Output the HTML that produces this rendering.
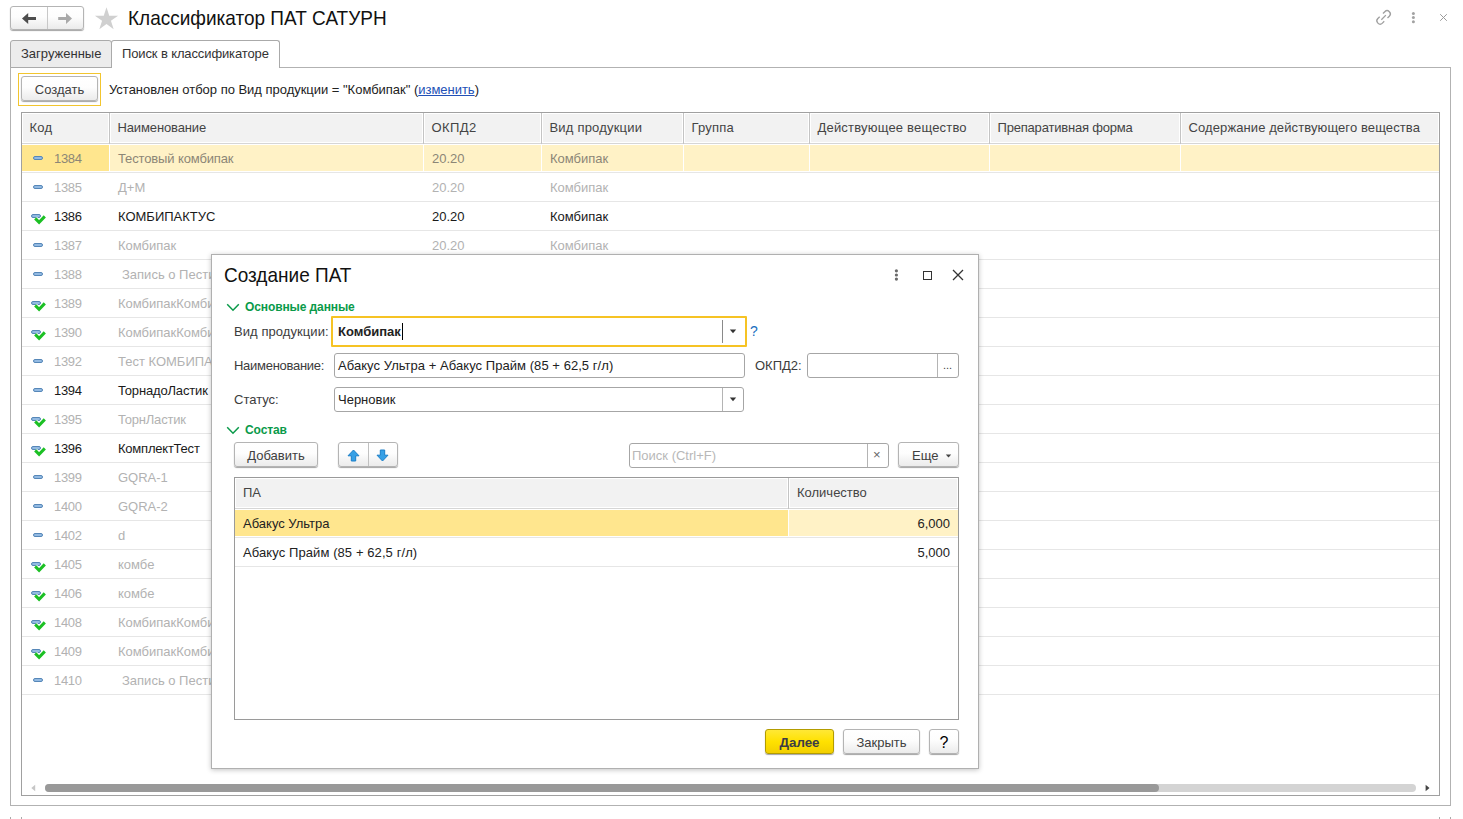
<!DOCTYPE html>
<html lang="ru">
<head>
<meta charset="utf-8">
<title>Классификатор ПАТ САТУРН</title>
<style>
*{box-sizing:border-box;margin:0;padding:0}
html,body{width:1463px;height:819px;overflow:hidden;background:#fff}
body{position:relative;font-family:"Liberation Sans",sans-serif;font-size:13px;color:#333;line-height:16px}
.abs{position:absolute}
.btn{position:absolute;border:1px solid #b4b4b4;border-radius:3px;background:linear-gradient(#ffffff 0%,#fdfdfd 45%,#ebebeb 100%);box-shadow:0 1px 1px rgba(0,0,0,.36);text-align:center;color:#404040;white-space:nowrap}
.lbl{position:absolute;white-space:nowrap;line-height:16px;color:#3c3c3c}
.inp{position:absolute;border:1px solid #a6a6a6;border-radius:3px;background:#fff}
/* nav */
#nav{left:10px;top:6px;width:74px;height:24px}
#nav .dv{position:absolute;left:36px;top:0;width:1px;height:22px;background:#c8c8c8}
#title{left:128px;top:8px;font-size:19px;line-height:22px;color:#111;transform:scaleY(1.070);transform-origin:0 16px}
/* tabs */
#tab1{left:10px;top:40px;width:102px;height:28px;border:1px solid #aaa;border-radius:3px 3px 0 0;background:#ececec}
#tab2{left:111px;top:40px;width:169px;height:28px;border:1px solid #aaa;border-bottom:none;border-radius:3px 3px 0 0;background:#fff}
#frame{left:10px;top:67px;width:1441px;height:739px;border:1px solid #b2b2b2}
.tabt{position:absolute;top:5px;font-size:13px;color:#333;white-space:nowrap}
#focus{left:18px;top:73px;width:83px;height:33px;border:1px solid #f2c52e}
#create{left:21px;top:76px;width:77px;height:25px;line-height:25px}
#filter{left:109px;top:82px;color:#222;letter-spacing:-0.02px}
#filter a{color:#2250b6;text-decoration:underline}
/* main table */
#tbl{left:21px;top:112px;width:1419px;height:684px;border:1px solid #a0a0a0;overflow:hidden}
#thead{position:absolute;left:0;top:0;width:1417px;height:31px;background:#fff;border-bottom:1px solid #d6d6d6}
.th{position:absolute;top:1px;height:28px;background:#f2f2f2;border-left:1px solid #fff;border-right:1px solid #fff;background-clip:padding-box}
.th span{position:absolute;left:6.5px;top:6px;white-space:nowrap;color:#444}
.th:after{content:"";position:absolute;right:-2px;top:-1px;width:1px;height:31px;background:#c4c4c4}
.th:last-child:after{display:none}
.row{position:absolute;left:0;width:1417px;height:29px;border-bottom:1px solid #e6e6e6;color:#b2b2b2}
.row.dark{color:#1a1a1a}
.row .c{position:absolute;top:7px;white-space:nowrap}
.row .ic{position:absolute;left:0;top:0}
.row.sel{color:#8c8676}
.selbg1{position:absolute;left:0;top:1px;width:87px;height:26px;background:#ffe68e}
.selbg2{position:absolute;left:88px;top:1px;width:1329px;height:26px;background:#fff2c6}
.selgap{position:absolute;top:1px;width:1px;height:26px;background:#fff}
/* scrollbar */
#sbtrack{left:45px;top:784px;width:1371px;height:8px;border-radius:4px;background:#d4d4d4}
#sbthumb{left:45px;top:784px;width:1114px;height:8px;border-radius:4px;background:#999}
/* dialog */
#dlg{left:211px;top:254px;width:768px;height:515px;background:#fff;border:1px solid #b0b0b0;box-shadow:0 1px 5px rgba(0,0,0,.24)}
#dtitle{left:224px;top:265px;font-size:19px;line-height:22px;color:#111;transform:scaleY(1.070);transform-origin:0 16px}
.sec{position:absolute;font-weight:bold;font-size:12px;color:#0a9a4a;white-space:nowrap;letter-spacing:-0.1px}
#f1{left:331px;top:316px;width:416px;height:31px;border:2px solid #f6c324;border-radius:1px;background:#fff}
.hdr2{position:absolute;top:1px;height:28px;background:#f2f2f2}
#t2{left:234px;top:477px;width:725px;height:243px;border:1px solid #9a9a9a;background:#fff;overflow:hidden}
#next{left:765px;top:729px;width:69px;height:25px;line-height:25px;font-weight:bold;font-size:13.33px;border-color:#b39c00;background:linear-gradient(#ffe836 0%,#ffe100 50%,#f2cf00 100%);color:#3c3c46}
#close{left:843px;top:729px;width:77px;height:25px;line-height:25px}
#help{left:929px;top:729px;width:30px;height:25px;line-height:26px;font-size:16px;color:#000}
</style>
</head>
<body>
<!-- top bar -->
<div class="btn" id="nav">
  <div class="dv"></div>
  <svg class="abs" style="left:0;top:0" width="72" height="22" viewBox="0 0 72 22"><path d="M11 11.500L17.200 6v4H25v3h-7.800v4z" fill="#4d4d4d"/><path d="M47.200 10H55V6l6 5.500-6 5.500v-4h-7.800z" fill="#a9a9a9"/></svg>
</div>
<svg class="abs" style="left:94px;top:6px" width="26" height="26" viewBox="0 0 26 26"><path d="M12.50 1.20L15.24 9.63L24.10 9.63L16.93 14.84L19.67 23.27L12.50 18.06L5.33 23.27L8.07 14.84L0.90 9.63L9.76 9.63z" fill="#d0d0d0"/></svg>
<div class="lbl" id="title">Классификатор ПАТ САТУРН</div>
<!-- right icons -->
<svg class="abs" style="left:1373px;top:7px" width="21" height="21" viewBox="0 0 21 21"><g transform="translate(10.600 10.400) rotate(-45)" fill="none" stroke="#a0a0a0" stroke-width="1.350"><path d="M2.300 -3.200H4.900A3.200 3.200 0 0 1 4.900 3.200H2.300"/><path d="M-2.300 3.200H-4.900A3.200 3.200 0 0 1 -4.900 -3.200H-2.300"/><path d="M-3.200 0H3.200"/></g></svg>
<svg class="abs" style="left:1410px;top:11px" width="7" height="13" viewBox="0 0 7 13"><circle cx="3.400" cy="2.500" r="1.500" fill="#a2a2a2"/><circle cx="3.400" cy="6.600" r="1.500" fill="#a2a2a2"/><circle cx="3.400" cy="10.700" r="1.500" fill="#a2a2a2"/></svg>
<svg class="abs" style="left:1439px;top:13px" width="9" height="9" viewBox="0 0 9 9"><path d="M1.200 1.200l6.600 6.600M7.800 1.200L1.200 7.800" stroke="#9a9a9a" stroke-width="1" fill="none"/></svg>

<!-- tabs & frame -->
<div class="abs" id="frame"></div>
<div class="abs" id="tab1"><span class="tabt" style="left:10px">Загруженные</span></div>
<div class="abs" id="tab2"><span class="tabt" style="left:10px;letter-spacing:-0.12px">Поиск в классификаторе</span></div>

<div class="abs" id="focus"></div>
<div class="btn" id="create">Создать</div>
<div class="lbl" id="filter">Установлен отбор по Вид продукции = "Комбипак" (<a>изменить</a>)</div>

<!-- main table -->
<div class="abs" id="tbl">
  <div id="thead">
<div class="th" style="left:0px;width:87px"><span style="letter-spacing:0.3px">Код</span></div>
<div class="th" style="left:88px;width:313px"><span style="letter-spacing:-0.13px">Наименование</span></div>
<div class="th" style="left:402px;width:117px"><span style="letter-spacing:0.4px">ОКПД2</span></div>
<div class="th" style="left:520px;width:141px"><span style="letter-spacing:0.2px">Вид продукции</span></div>
<div class="th" style="left:662px;width:125px"><span style="letter-spacing:0.2px">Группа</span></div>
<div class="th" style="left:788px;width:179px"><span style="letter-spacing:0.19px">Действующее вещество</span></div>
<div class="th" style="left:968px;width:190px"><span style="letter-spacing:-0.19px">Препаративная форма</span></div>
<div class="th" style="left:1159px;width:258px"><span style="letter-spacing:0.1px">Содержание действующего вещества</span></div>
  </div>
<div class="row sel" style="top:31px">
<div class="selbg1"></div><div class="selbg2"></div>
<div class="selgap" style="left:401px"></div>
<div class="selgap" style="left:519px"></div>
<div class="selgap" style="left:661px"></div>
<div class="selgap" style="left:787px"></div>
<div class="selgap" style="left:967px"></div>
<div class="selgap" style="left:1158px"></div>
<svg class="ic" width="30" height="28" viewBox="0 0 30 28"><rect x="11.5" y="12.5" width="9" height="3" rx="1.5" fill="#93bae2" stroke="#5687b8" stroke-width="1"/></svg>
<span class="c" style="left:32px;letter-spacing:-0.3px">1384</span>
<span class="c" style="left:96px;letter-spacing:-0.13px">Тестовый комбипак</span>
<span class="c" style="left:410px">20.20</span>
<span class="c" style="left:528px">Комбипак</span>
</div>
<div class="row" style="top:60px">
<svg class="ic" width="30" height="28" viewBox="0 0 30 28"><rect x="11.5" y="12.5" width="9" height="3" rx="1.5" fill="#93bae2" stroke="#5687b8" stroke-width="1"/></svg>
<span class="c" style="left:32px;letter-spacing:-0.3px">1385</span>
<span class="c" style="left:96px">Д+М</span>
<span class="c" style="left:410px">20.20</span>
<span class="c" style="left:528px">Комбипак</span>
</div>
<div class="row dark" style="top:89px">
<svg class="ic" width="30" height="28" viewBox="0 0 30 28"><rect x="9.5" y="12.5" width="9" height="3" rx="1.5" fill="#93bae2" stroke="#5687b8" stroke-width="1"/><path d="M13.2 16.4L17.1 20.4L22.8 14.4" fill="none" stroke="#fff" stroke-width="4.6"/><path d="M13.2 16.4L17.1 20.4L22.8 14.4" fill="none" stroke="#1cc024" stroke-width="3"/></svg>
<span class="c" style="left:32px;letter-spacing:-0.3px">1386</span>
<span class="c" style="left:96px">КОМБИПАКТУС</span>
<span class="c" style="left:410px">20.20</span>
<span class="c" style="left:528px">Комбипак</span>
</div>
<div class="row" style="top:118px">
<svg class="ic" width="30" height="28" viewBox="0 0 30 28"><rect x="11.5" y="12.5" width="9" height="3" rx="1.5" fill="#93bae2" stroke="#5687b8" stroke-width="1"/></svg>
<span class="c" style="left:32px;letter-spacing:-0.3px">1387</span>
<span class="c" style="left:96px">Комбипак</span>
<span class="c" style="left:410px">20.20</span>
<span class="c" style="left:528px">Комбипак</span>
</div>
<div class="row" style="top:147px">
<svg class="ic" width="30" height="28" viewBox="0 0 30 28"><rect x="11.5" y="12.5" width="9" height="3" rx="1.5" fill="#93bae2" stroke="#5687b8" stroke-width="1"/></svg>
<span class="c" style="left:32px;letter-spacing:-0.3px">1388</span>
<span class="c" style="left:100px">Запись о Пестициде</span>
<span class="c" style="left:410px">20.20</span>
<span class="c" style="left:528px">Комбипак</span>
</div>
<div class="row" style="top:176px">
<svg class="ic" width="30" height="28" viewBox="0 0 30 28"><rect x="9.5" y="12.5" width="9" height="3" rx="1.5" fill="#93bae2" stroke="#5687b8" stroke-width="1"/><path d="M13.2 16.4L17.1 20.4L22.8 14.4" fill="none" stroke="#fff" stroke-width="4.6"/><path d="M13.2 16.4L17.1 20.4L22.8 14.4" fill="none" stroke="#1cc024" stroke-width="3"/></svg>
<span class="c" style="left:32px;letter-spacing:-0.3px">1389</span>
<span class="c" style="left:96px">КомбипакКомбипак</span>
<span class="c" style="left:410px">20.20</span>
<span class="c" style="left:528px">Комбипак</span>
</div>
<div class="row" style="top:205px">
<svg class="ic" width="30" height="28" viewBox="0 0 30 28"><rect x="9.5" y="12.5" width="9" height="3" rx="1.5" fill="#93bae2" stroke="#5687b8" stroke-width="1"/><path d="M13.2 16.4L17.1 20.4L22.8 14.4" fill="none" stroke="#fff" stroke-width="4.6"/><path d="M13.2 16.4L17.1 20.4L22.8 14.4" fill="none" stroke="#1cc024" stroke-width="3"/></svg>
<span class="c" style="left:32px;letter-spacing:-0.3px">1390</span>
<span class="c" style="left:96px">КомбипакКомбипак</span>
<span class="c" style="left:410px">20.20</span>
<span class="c" style="left:528px">Комбипак</span>
</div>
<div class="row" style="top:234px">
<svg class="ic" width="30" height="28" viewBox="0 0 30 28"><rect x="11.5" y="12.5" width="9" height="3" rx="1.5" fill="#93bae2" stroke="#5687b8" stroke-width="1"/></svg>
<span class="c" style="left:32px;letter-spacing:-0.3px">1392</span>
<span class="c" style="left:96px">Тест КОМБИПАК</span>
<span class="c" style="left:410px">20.20</span>
<span class="c" style="left:528px">Комбипак</span>
</div>
<div class="row dark" style="top:263px">
<svg class="ic" width="30" height="28" viewBox="0 0 30 28"><rect x="11.5" y="12.5" width="9" height="3" rx="1.5" fill="#93bae2" stroke="#5687b8" stroke-width="1"/></svg>
<span class="c" style="left:32px;letter-spacing:-0.3px">1394</span>
<span class="c" style="left:96px;letter-spacing:-0.16px">ТорнадоЛастик</span>
<span class="c" style="left:410px">20.20</span>
<span class="c" style="left:528px">Комбипак</span>
</div>
<div class="row" style="top:292px">
<svg class="ic" width="30" height="28" viewBox="0 0 30 28"><rect x="9.5" y="12.5" width="9" height="3" rx="1.5" fill="#93bae2" stroke="#5687b8" stroke-width="1"/><path d="M13.2 16.4L17.1 20.4L22.8 14.4" fill="none" stroke="#fff" stroke-width="4.6"/><path d="M13.2 16.4L17.1 20.4L22.8 14.4" fill="none" stroke="#1cc024" stroke-width="3"/></svg>
<span class="c" style="left:32px;letter-spacing:-0.3px">1395</span>
<span class="c" style="left:96px;letter-spacing:-0.2px">ТорнЛастик</span>
<span class="c" style="left:410px">20.20</span>
<span class="c" style="left:528px">Комбипак</span>
</div>
<div class="row dark" style="top:321px">
<svg class="ic" width="30" height="28" viewBox="0 0 30 28"><rect x="9.5" y="12.5" width="9" height="3" rx="1.5" fill="#93bae2" stroke="#5687b8" stroke-width="1"/><path d="M13.2 16.4L17.1 20.4L22.8 14.4" fill="none" stroke="#fff" stroke-width="4.6"/><path d="M13.2 16.4L17.1 20.4L22.8 14.4" fill="none" stroke="#1cc024" stroke-width="3"/></svg>
<span class="c" style="left:32px;letter-spacing:-0.3px">1396</span>
<span class="c" style="left:96px;letter-spacing:-0.22px">КомплектТест</span>
<span class="c" style="left:410px">20.20</span>
<span class="c" style="left:528px">Комбипак</span>
</div>
<div class="row" style="top:350px">
<svg class="ic" width="30" height="28" viewBox="0 0 30 28"><rect x="11.5" y="12.5" width="9" height="3" rx="1.5" fill="#93bae2" stroke="#5687b8" stroke-width="1"/></svg>
<span class="c" style="left:32px;letter-spacing:-0.3px">1399</span>
<span class="c" style="left:96px">GQRA-1</span>
<span class="c" style="left:410px">20.20</span>
<span class="c" style="left:528px">Комбипак</span>
</div>
<div class="row" style="top:379px">
<svg class="ic" width="30" height="28" viewBox="0 0 30 28"><rect x="11.5" y="12.5" width="9" height="3" rx="1.5" fill="#93bae2" stroke="#5687b8" stroke-width="1"/></svg>
<span class="c" style="left:32px;letter-spacing:-0.3px">1400</span>
<span class="c" style="left:96px">GQRA-2</span>
<span class="c" style="left:410px">20.20</span>
<span class="c" style="left:528px">Комбипак</span>
</div>
<div class="row" style="top:408px">
<svg class="ic" width="30" height="28" viewBox="0 0 30 28"><rect x="11.5" y="12.5" width="9" height="3" rx="1.5" fill="#93bae2" stroke="#5687b8" stroke-width="1"/></svg>
<span class="c" style="left:32px;letter-spacing:-0.3px">1402</span>
<span class="c" style="left:96px">d</span>
<span class="c" style="left:410px">20.20</span>
<span class="c" style="left:528px">Комбипак</span>
</div>
<div class="row" style="top:437px">
<svg class="ic" width="30" height="28" viewBox="0 0 30 28"><rect x="9.5" y="12.5" width="9" height="3" rx="1.5" fill="#93bae2" stroke="#5687b8" stroke-width="1"/><path d="M13.2 16.4L17.1 20.4L22.8 14.4" fill="none" stroke="#fff" stroke-width="4.6"/><path d="M13.2 16.4L17.1 20.4L22.8 14.4" fill="none" stroke="#1cc024" stroke-width="3"/></svg>
<span class="c" style="left:32px;letter-spacing:-0.3px">1405</span>
<span class="c" style="left:96px">комбе</span>
<span class="c" style="left:410px">20.20</span>
<span class="c" style="left:528px">Комбипак</span>
</div>
<div class="row" style="top:466px">
<svg class="ic" width="30" height="28" viewBox="0 0 30 28"><rect x="9.5" y="12.5" width="9" height="3" rx="1.5" fill="#93bae2" stroke="#5687b8" stroke-width="1"/><path d="M13.2 16.4L17.1 20.4L22.8 14.4" fill="none" stroke="#fff" stroke-width="4.6"/><path d="M13.2 16.4L17.1 20.4L22.8 14.4" fill="none" stroke="#1cc024" stroke-width="3"/></svg>
<span class="c" style="left:32px;letter-spacing:-0.3px">1406</span>
<span class="c" style="left:96px">комбе</span>
<span class="c" style="left:410px">20.20</span>
<span class="c" style="left:528px">Комбипак</span>
</div>
<div class="row" style="top:495px">
<svg class="ic" width="30" height="28" viewBox="0 0 30 28"><rect x="9.5" y="12.5" width="9" height="3" rx="1.5" fill="#93bae2" stroke="#5687b8" stroke-width="1"/><path d="M13.2 16.4L17.1 20.4L22.8 14.4" fill="none" stroke="#fff" stroke-width="4.6"/><path d="M13.2 16.4L17.1 20.4L22.8 14.4" fill="none" stroke="#1cc024" stroke-width="3"/></svg>
<span class="c" style="left:32px;letter-spacing:-0.3px">1408</span>
<span class="c" style="left:96px">КомбипакКомбипак</span>
<span class="c" style="left:410px">20.20</span>
<span class="c" style="left:528px">Комбипак</span>
</div>
<div class="row" style="top:524px">
<svg class="ic" width="30" height="28" viewBox="0 0 30 28"><rect x="9.5" y="12.5" width="9" height="3" rx="1.5" fill="#93bae2" stroke="#5687b8" stroke-width="1"/><path d="M13.2 16.4L17.1 20.4L22.8 14.4" fill="none" stroke="#fff" stroke-width="4.6"/><path d="M13.2 16.4L17.1 20.4L22.8 14.4" fill="none" stroke="#1cc024" stroke-width="3"/></svg>
<span class="c" style="left:32px;letter-spacing:-0.3px">1409</span>
<span class="c" style="left:96px">КомбипакКомбипак</span>
<span class="c" style="left:410px">20.20</span>
<span class="c" style="left:528px">Комбипак</span>
</div>
<div class="row" style="top:553px">
<svg class="ic" width="30" height="28" viewBox="0 0 30 28"><rect x="11.5" y="12.5" width="9" height="3" rx="1.5" fill="#93bae2" stroke="#5687b8" stroke-width="1"/></svg>
<span class="c" style="left:32px;letter-spacing:-0.3px">1410</span>
<span class="c" style="left:100px">Запись о Пестициде</span>
<span class="c" style="left:410px">20.20</span>
<span class="c" style="left:528px">Комбипак</span>
</div>
</div>
<!-- scrollbar -->
<div class="abs" id="sbtrack"></div>
<div class="abs" id="sbthumb"></div>
<svg class="abs" style="left:31px;top:784px" width="5" height="8" viewBox="0 0 5 8"><path d="M4.200 .8v6.400L.3 4z" fill="#c6c6c6"/></svg>
<svg class="abs" style="left:1425px;top:784px" width="5" height="8" viewBox="0 0 5 8"><path d="M.6 .8v6.400l3.900-3.200z" fill="#444"/></svg>
<!-- bottom ticks -->
<div class="abs" style="left:10px;top:817px;width:1px;height:2px;background:#aaa"></div>
<div class="abs" style="left:21px;top:817px;width:1px;height:2px;background:#aaa"></div>
<div class="abs" style="left:1439px;top:817px;width:1px;height:2px;background:#aaa"></div>
<div class="abs" style="left:1450px;top:817px;width:1px;height:2px;background:#aaa"></div>

<!-- dialog -->
<div class="abs" id="dlg"></div>
<div class="lbl" id="dtitle">Создание ПАТ</div>
<svg class="abs" style="left:893px;top:268px" width="7" height="14" viewBox="0 0 7 14"><circle cx="3.400" cy="2.800" r="1.600" fill="#6a6a6a"/><circle cx="3.400" cy="7" r="1.600" fill="#6a6a6a"/><circle cx="3.400" cy="11.100" r="1.600" fill="#6a6a6a"/></svg>
<div class="abs" style="left:923px;top:271px;width:9px;height:9px;border:1.500px solid #333"></div>
<svg class="abs" style="left:952px;top:269px" width="12" height="12" viewBox="0 0 12 12"><path d="M1 1l10 10M11 1L1 11" stroke="#333" stroke-width="1.300" fill="none"/></svg>

<svg class="abs" style="left:226px;top:302.700px" width="14" height="9" viewBox="0 0 14 9"><path d="M1.200 1.200L7 7.200l5.800-6" fill="none" stroke="#0a9a4a" stroke-width="1.500"/></svg>
<div class="sec" style="left:245px;top:299px">Основные данные</div>

<div class="lbl" style="left:234px;top:324px;letter-spacing:0.07px">Вид продукции:</div>
<div class="abs" id="f1">
  <span class="lbl" style="left:5px;top:6px;font-weight:bold;color:#222">Комбипак</span>
  <div class="abs" style="left:69px;top:5px;width:1px;height:17px;background:#000"></div>
  <div class="abs" style="left:389px;top:2px;width:1px;height:23px;background:#8a8a8a"></div>
  <svg class="abs" style="left:396px;top:11px" width="8" height="5" viewBox="0 0 8 5"><path d="M.8.500h6.400L4 4.200z" fill="#333"/></svg>
</div>
<div class="lbl" style="left:750px;top:323px;color:#1a6fc0;font-size:14px">?</div>

<div class="lbl" style="left:234px;top:358px;letter-spacing:-0.28px">Наименование:</div>
<div class="inp" style="left:334px;top:353px;width:411px;height:25px"><span class="lbl" style="left:3px;top:4px;color:#222;letter-spacing:0.05px">Абакус Ультра + Абакус Прайм (85 + 62,5 г/л)</span></div>
<div class="lbl" style="left:755px;top:358px">ОКПД2:</div>
<div class="inp" style="left:807px;top:353px;width:152px;height:25px">
  <div class="abs" style="left:129px;top:0;width:1px;height:23px;background:#b4b4b4"></div>
  <span class="lbl" style="left:135px;top:3px;font-size:11px;color:#444">...</span>
</div>

<div class="lbl" style="left:234px;top:392px">Статус:</div>
<div class="inp" style="left:334px;top:387px;width:410px;height:25px"><span class="lbl" style="left:3px;top:4px;color:#222">Черновик</span>
  <div class="abs" style="left:387px;top:0;width:1px;height:23px;background:#b4b4b4"></div>
  <svg class="abs" style="left:394px;top:9px" width="8" height="5" viewBox="0 0 8 5"><path d="M.8.500h6.400L4 4.200z" fill="#333"/></svg>
</div>

<svg class="abs" style="left:226px;top:425.700px" width="14" height="9" viewBox="0 0 14 9"><path d="M1.200 1.200L7 7.200l5.800-6" fill="none" stroke="#0a9a4a" stroke-width="1.500"/></svg>
<div class="sec" style="left:245px;top:422px">Состав</div>

<div class="btn" style="left:234px;top:442px;width:84px;height:25px;line-height:25px">Добавить</div>
<div class="btn" style="left:338px;top:442px;width:60px;height:25px">
  <div class="abs" style="left:29px;top:0;width:1px;height:23px;background:#c0c0c0"></div>
  <svg class="abs" style="left:8px;top:6px" width="13" height="13" viewBox="0 0 13 13"><path d="M6.500 1L12 6.800H8.700V12H4.300V6.800H1z" fill="#36a0e6" stroke="#1b7fc8" stroke-width="1" stroke-linejoin="round"/></svg>
  <svg class="abs" style="left:37px;top:6px" width="13" height="13" viewBox="0 0 13 13"><path d="M6.500 12L12 6.200H8.700V1H4.300v5.200H1z" fill="#36a0e6" stroke="#1b7fc8" stroke-width="1" stroke-linejoin="round"/></svg>
</div>
<div class="inp" style="left:629px;top:443px;width:260px;height:25px">
  <span class="lbl" style="left:2px;top:4px;color:#b8b8b8">Поиск (Ctrl+F)</span>
  <div class="abs" style="left:237px;top:0;width:1px;height:23px;background:#b4b4b4"></div>
  <span class="lbl" style="left:243px;top:3px;color:#666">×</span>
</div>
<div class="btn" style="left:898px;top:442px;width:61px;height:25px;line-height:25px;text-align:left;padding-left:13px">Еще
  <svg class="abs" style="left:46px;top:11px" width="7" height="4" viewBox="0 0 7 4"><path d="M.8.400h5.400L3.500 3.400z" fill="#444"/></svg>
</div>

<div class="abs" id="t2">
  <div class="abs" style="left:0;top:0;width:723px;height:31px;border-bottom:1px solid #d6d6d6"></div>
  <div class="hdr2" style="left:1px;width:551px"><span class="lbl" style="left:7px;top:6px;color:#444">ПА</span></div>
  <div class="abs" style="left:553px;top:0;width:1px;height:31px;background:#c4c4c4"></div>
  <div class="hdr2" style="left:555px;width:167px"><span class="lbl" style="left:7px;top:6px;color:#444">Количество</span></div>
  <div class="abs" style="left:0;top:32px;width:553px;height:26px;background:#ffe68e"></div>
  <div class="abs" style="left:554px;top:32px;width:169px;height:26px;background:#fff2c6"></div>
  <div class="abs" style="left:0;top:59px;width:723px;height:1px;background:#e6e6e6"></div>
  <div class="abs" style="left:0;top:88px;width:723px;height:1px;background:#e6e6e6"></div>
  <span class="lbl" style="left:8px;top:38px;color:#222">Абакус Ультра</span>
  <span class="lbl" style="right:8px;top:38px;color:#222">6,000</span>
  <span class="lbl" style="left:8px;top:67px;color:#222;letter-spacing:0.09px">Абакус Прайм (85 + 62,5 г/л)</span>
  <span class="lbl" style="right:8px;top:67px;color:#222">5,000</span>
</div>

<div class="btn" id="next">Далее</div>
<div class="btn" id="close">Закрыть</div>
<div class="btn" id="help">?</div>
</body>
</html>
